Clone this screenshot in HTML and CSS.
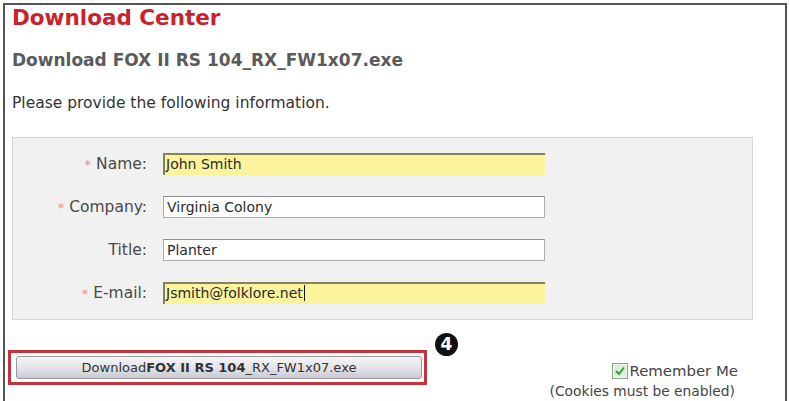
FILE: index.html
```html
<!DOCTYPE html>
<html>
<head>
<meta charset="utf-8">
<link rel="stylesheet" href="styles.css">
</head>
<body>
<div class="frame">
  <h1 class="title">Download Center</h1>
  <h2 class="subtitle">Download FOX II RS 104_RX_FW1x07.exe</h2>
  <p class="intro">Please provide the following information.</p>
  <div class="panel">
    <div class="form">
      <div class="label"><span class="req">*</span> Name:</div>
      <div class="field field-hl">John Smith</div>
      <div class="label"><span class="req">*</span> Company:</div>
      <div class="field">Virginia Colony</div>
      <div class="label">Title:</div>
      <div class="field">Planter</div>
      <div class="label"><span class="req">*</span> E-mail:</div>
      <div class="field field-hl">Jsmith@folklore.net<span class="caret"></span></div>
    </div>
  </div>
  <div class="actions">
    <div class="btn-outline">
      <div class="btn">Download<b>FOX II RS 104</b>_RX_FW1x07.exe</div>
    </div>
    <span class="callout">4</span>
    <div class="remember">
      <div class="remember-row">
        <svg class="check" width="16" height="16" viewBox="0 0 16 16">
          <rect x="0.5" y="0.5" width="15" height="15" fill="#eef6ee" stroke="#8fa58f"/>
          <rect x="2" y="2" width="12" height="12" fill="#dcefdc"/>
          <path d="M4 8 L7 11 L12 4.5" fill="none" stroke="#3f9a3f" stroke-width="2"/>
        </svg>
        <span>Remember Me</span>
      </div>
      <div class="cookies">(Cookies must be enabled)</div>
    </div>
  </div>
</div>
</body>
</html>
```
FILE: styles.css
```css
html, body {
  margin: 0;
  padding: 0;
  background: #fff;
  overflow: hidden;
}
body {
  font-family: "DejaVu Sans", Verdana, sans-serif;
  color: #333;
}
.frame {
  box-sizing: border-box;
  margin: 3px 0 0 3px;
  width: 784px;
  height: 398px;
  border: 2px solid #555;
  border-bottom: none;
}
.title {
  margin: 0 0 0 7px;
  font-size: 21.5px;
  line-height: 26px;
  font-weight: bold;
  color: #c8232b;
}
.subtitle {
  margin: 18px 0 0 7px;
  font-size: 17px;
  line-height: 22px;
  font-weight: bold;
  color: #5b5b5b;
}
.intro {
  margin: 22px 0 0 7px;
  font-size: 15.5px;
  line-height: 20px;
  color: #333;
}
.panel {
  box-sizing: border-box;
  margin: 24px 0 0 7px;
  width: 741px;
  height: 183px;
  background: #f1f1f1;
  border: 1px solid #d6d6d6;
  padding: 15px 0 0 0;
}
.form {
  display: grid;
  grid-template-columns: 134px 382px;
  column-gap: 16px;
  row-gap: 21px;
  align-items: center;
}
.label {
  text-align: right;
  font-size: 15.5px;
  color: #4a4a4a;
}
.req {
  color: #ee8a95;
  font-size: 13px;
}
.field {
  box-sizing: border-box;
  height: 22px;
  background: #fff;
  border: 1px solid #adadad;
  border-top-color: #8e8e8e;
  font-size: 14px;
  line-height: 20px;
  padding-left: 3px;
  color: #2a2a2a;
  white-space: nowrap;
}
.field-hl {
  background: #fcf49c;
  border: none;
  border-top: 2px solid #86805c;
  border-left: 2px solid #86805c;
  line-height: 19px;
  padding-left: 1px;
}
.caret {
  display: inline-block;
  width: 1px;
  height: 16px;
  background: #111;
  vertical-align: -3px;
  margin-left: 1px;
}
.actions {
  position: relative;
  display: flex;
  justify-content: space-between;
  align-items: flex-start;
  margin-top: 30px;
}
.btn-outline {
  box-sizing: border-box;
  margin-left: 3px;
  width: 419px;
  height: 35px;
  border: 3px solid #c5333c;
  padding: 3px 2px 0 5px;
}
.btn {
  box-sizing: border-box;
  height: 23px;
  border: 1px solid #9a9a9a;
  border-radius: 3px;
  background: linear-gradient(#f6f6f8, #e2e2e8 55%, #c9c9d2);
  font-size: 13px;
  line-height: 21px;
  text-align: center;
  color: #333;
}
.btn b {
  font-weight: bold;
}
.callout {
  position: absolute;
  left: 430px;
  top: -17px;
  width: 23px;
  height: 23px;
  border-radius: 50%;
  background: #111;
  color: #fff;
  font-weight: bold;
  font-size: 17px;
  line-height: 23px;
  text-align: center;
}
.remember {
  margin: 12px 47px 0 0;
  text-align: right;
}
.remember-row {
  display: flex;
  justify-content: flex-end;
  align-items: center;
  gap: 2px;
  font-size: 14.9px;
  line-height: 18px;
  color: #444;
}
.check {
  display: block;
}
.cookies {
  margin-top: 3px;
  margin-right: 3px;
  font-size: 13.8px;
  line-height: 16px;
  color: #444;
}
```
